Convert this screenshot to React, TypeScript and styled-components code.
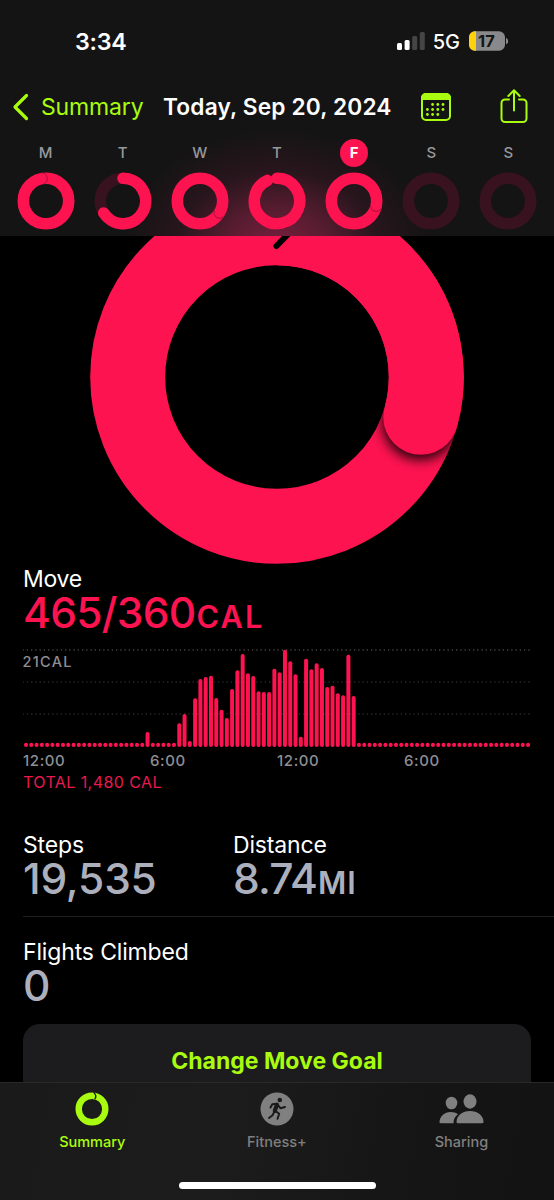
import React from "react";
import styled, { createGlobalStyle } from "styled-components";

const RED = "#fc1350";
const LIME = "#a9fb0f";

const Global = createGlobalStyle`
  * { box-sizing: border-box; }
  body { margin: 0; background: #000; }
`;

const Screen = styled.div`
  width: 554px;
  height: 1200px;
  background: #000;
  overflow: hidden;
  display: flex;
  flex-direction: column;
  font-family: Inter, "Liberation Sans", sans-serif;
  color: #fff;
`;

const T = styled.span<{ $size: number; $w?: number; $ls?: number; $c?: string; $lh?: number }>`
  display: block;
  white-space: nowrap;
  font-size: ${(p) => p.$size}px;
  font-weight: ${(p) => p.$w ?? 400};
  letter-spacing: ${(p) => p.$ls ?? 0}px;
  color: ${(p) => p.$c ?? "#fff"};
  line-height: ${(p) => (p.$lh ? `${p.$lh}px` : "normal")};
`;

const Header = styled.header`
  height: 236px;
  flex: none;
  background:
    radial-gradient(ellipse 155px 122px at 277px 250px, rgba(150, 34, 74, 0.8) 0%, rgba(120, 32, 62, 0.66) 35%, rgba(70, 24, 42, 0.4) 65%, rgba(20, 20, 20, 0) 100%),
    #141414;
`;

const StatusBar = styled.div`
  height: 82px;
  padding: 0 46px 0 75px;
  display: flex;
  align-items: center;
  justify-content: space-between;
`;

const StatusRight = styled.div`
  display: flex;
  align-items: center;
`;

const Network = styled(T)`
  margin: 0 9px 0 8px;
  padding-top: 1px;
`;

const NavBar = styled.div`
  height: 50px;
  display: flex;
  align-items: center;
  padding: 0 26px 0 12px;
`;

const Back = styled.div`
  width: 151px;
  display: flex;
  align-items: center;
  gap: 11px;
`;

const Title = styled.div`
  width: 257px;
  padding-bottom: 2px;
`;

const NavIcons = styled.div`
  flex: 1;
  display: flex;
  align-items: center;
  justify-content: space-between;
`;

const Week = styled.div`
  display: flex;
  padding: 7px 7px 0;
`;

const Day = styled.div`
  width: 77.15px;
  display: flex;
  flex-direction: column;
  align-items: center;
`;

const DayLabel = styled.div<{ $on?: boolean }>`
  width: 28px;
  height: 28px;
  border-radius: 50%;
  display: flex;
  align-items: center;
  justify-content: center;
  padding-bottom: 1px;
  font-size: 15px;
  font-weight: ${(p) => (p.$on ? 700 : 500)};
  color: ${(p) => (p.$on ? "#fff" : "#98989c")};
  background: ${(p) => (p.$on ? RED : "transparent")};
  margin-bottom: 5px;
`;

const Hero = styled.section`
  height: 330px;
  flex: none;
  svg { display: block; }
`;

const Body = styled.main`
  flex: none;
  height: 516px;
  padding-left: 23px;
  overflow: hidden;
`;

const Axis = styled.div`
  display: grid;
  grid-template-columns: 127px 127px 127px auto;
  margin-top: 3px;
  height: 19px;
`;

const Total = styled(T)`
  height: 24px;
`;

const ChartWrap = styled.div`
  margin-top: 12px;
  height: 100px;
  svg { display: block; }
`;

const Stats = styled.div<{ $h: number; $top: number; $line?: boolean }>`
  display: grid;
  grid-template-columns: 210px auto;
  height: ${(p) => p.$h}px;
  padding-top: ${(p) => p.$top}px;
  border-bottom: ${(p) => (p.$line ? "1px solid #1f1f20" : "none")};
`;

const Big = styled.div<{ $c: string; $ls?: number; $unit?: number }>`
  font-size: 42.5px;
  line-height: 42px;
  height: 44px;
  font-weight: 500;
  letter-spacing: ${(p) => p.$ls ?? 0}px;
  color: ${(p) => p.$c};
  white-space: nowrap;
  small {
    margin-left: 1px;
    font-size: 30.7px;
    font-weight: 600;
    letter-spacing: ${(p) => p.$unit ?? 0}px;
  }
`;

const Goal = styled.div`
  width: 508px;
  height: 60px;
  background: #1c1c1e;
  border-radius: 17px 17px 0 0;
  display: flex;
  justify-content: center;
  padding-top: 22px;
`;

const TabBar = styled.nav`
  flex: none;
  height: 118px;
  border-top: 1px solid #29292a;
  background: linear-gradient(100deg, #1a1a1a 0%, #1c1c1c 40%, #151515 75%, #131313 100%);
  display: flex;
  flex-direction: column;
  align-items: center;
`;

const Tabs = styled.div`
  width: 554px;
  height: 99px;
  display: grid;
  grid-template-columns: repeat(3, 184.6px);
`;

const Tab = styled.div`
  display: flex;
  flex-direction: column;
  align-items: center;
  padding-top: 8px;
  gap: 6px;
`;

const HomeBar = styled.div`
  width: 197px;
  height: 7px;
  border-radius: 4px;
  background: #fff;
`;

function pt(cx: number, cy: number, r: number, deg: number) {
  const a = (deg * Math.PI) / 180;
  return [cx + r * Math.sin(a), cy - r * Math.cos(a)];
}

function MiniRing({ end = 0 }: { end?: number }) {
  const full = end > 340;
  const [x, y] = pt(29, 29, 22.7, end);
  const [lx, ly] = pt(29, 29, 17.2, end);
  const [ox, oy] = pt(29, 29, 28.3, end);
  return (
    <svg width="58" height="58" viewBox="0 0 58 58">
      <circle cx="29" cy="29" r="22.7" fill="none" stroke={full ? RED : "#38121f"} strokeWidth="11.6" />
      {full && (
        <path d={`M${lx} ${ly}A5.7 5.7 0 0 0 ${ox} ${oy}`} fill="none" stroke="#a80e3b" strokeWidth="1" />
      )}
      {!full && end > 0 && (
        <path d={`M29 6.3A22.7 22.7 0 1 1 ${x} ${y}`} fill="none" stroke={RED} strokeWidth="11.6" strokeLinecap="round" />
      )}
    </svg>
  );
}

const days: { l: string; end?: number; on?: boolean }[] = [
  { l: "M", end: 352 },
  { l: "T", end: 238 },
  { l: "W", end: 484 },
  { l: "T", end: 335 },
  { l: "F", end: 465, on: true },
  { l: "S" },
  { l: "S" },
];

const active: Record<number, number> = {
  23: 15, 29: 23.7, 30: 33, 31: 6, 32: 48.7, 33: 68, 34: 70, 35: 71.3, 36: 49, 37: 37.3, 38: 29,
  39: 58, 40: 76.7, 41: 93, 42: 73.7, 43: 71, 44: 55.7, 45: 55, 46: 55, 47: 78.3, 48: 74.7,
  49: 97.3, 50: 85.7, 51: 72.7, 52: 10.3, 53: 88.3, 54: 77.7, 55: 83.7, 56: 79, 57: 60, 58: 61.3,
  59: 53.7, 60: 51.7, 61: 92.3, 62: 51,
};

function Chart() {
  return (
    <svg width="531" height="100" viewBox="23 648 531 100">
      {[650, 682, 714].map((y, i) => (
        <line key={y} x1="22.5" x2="532" y1={y} y2={y} stroke={i ? "#3c3c3e" : "#646466"} strokeWidth="1.2" strokeDasharray="1.3 2.95" />
      ))}
      <text x="22.5" y="666.5" fontSize="14.5" fontWeight="500" fill="#8e8e93" textLength="49">21CAL</text>
      {Array.from({ length: 96 }, (_, i) => {
        const h = active[i] ?? 4.2;
        return <rect key={i} x={26 + i * 5.285 - 2} y={747 - h} width="4" height={h} rx="1.9" fill={RED} />;
      })}
    </svg>
  );
}

export default function App() {
  const [ex, ey] = pt(277, 377.5, 149.3, 105);
  return (
    <Screen>
      <Global />
      <Header>
        <StatusBar>
          <T $size={23.3} $w={600} $ls={-0.3}>3:34</T>
          <StatusRight>
            <svg width="28" height="18" viewBox="0 0 28 18">
              <rect x="0" y="11" width="5" height="7" rx="1.5" fill="#fff" />
              <rect x="7.6" y="8" width="5" height="10" rx="1.5" fill="#fff" />
              <rect x="15.2" y="4" width="5" height="14" rx="1.5" fill="#454545" />
              <rect x="22.8" y="0" width="5" height="18" rx="1.5" fill="#454545" />
            </svg>
            <Network $size={20} $w={500}>5G</Network>
            <svg width="39" height="20" viewBox="0 0 39 20">
              <defs><clipPath id="bat"><rect width="36" height="19.5" y=".2" rx="6" /></clipPath></defs>
              <g clipPath="url(#bat)">
                <rect width="36" height="20" fill="#89898b" />
                <rect width="7" height="20" fill="#fdd20c" />
              </g>
              <path d="M37 6.8q2.2 1.2 2.2 3.2T37 13.2Z" fill="#89898b" />
              <text x="17.4" y="16" fontSize="16.5" fontWeight="700" textAnchor="middle" fill="#141414">17</text>
            </svg>
          </StatusRight>
        </StatusBar>
        <NavBar>
          <Back>
            <svg width="18" height="28" viewBox="0 0 18 28">
              <path d="M14.5 2.5L3 14l11.5 11.5" fill="none" stroke={LIME} strokeWidth="3.2" strokeLinecap="round" strokeLinejoin="round" />
            </svg>
            <T $size={23} $ls={-0.15} $c={LIME}>Summary</T>
          </Back>
          <Title><T $size={22.7} $w={600} $ls={0.15}>Today, Sep 20, 2024</T></Title>
          <NavIcons>
            <svg width="32" height="30" viewBox="0 0 32 30">
              <rect x="2" y="2" width="28" height="26" rx="4" fill="none" stroke={LIME} strokeWidth="2" />
              <path d="M1 8V6a5 5 0 0 1 5-5h20a5 5 0 0 1 5 5v2Z" fill={LIME} />
              {[[12.6, 12.5], [17.8, 12.5], [23, 12.5], [7.4, 17.5], [12.6, 17.5], [17.8, 17.5], [23, 17.5], [7.4, 22.5], [12.6, 22.5], [17.8, 22.5]].map(([x, y]) => (
                <circle key={`${x}-${y}`} cx={x} cy={y} r="1.4" fill={LIME} />
              ))}
            </svg>
            <svg width="28" height="36" viewBox="0 0 28 36">
              <path d="M9 10.5H5A3.5 3.5 0 0 0 1.5 14v15.5A3.5 3.5 0 0 0 5 33h18a3.5 3.5 0 0 0 3.5-3.5V14a3.5 3.5 0 0 0-3.5-3.5h-4M14 21.5V1.5M8.3 7L14 1.3 19.7 7" fill="none" stroke={LIME} strokeWidth="2" strokeLinecap="round" strokeLinejoin="round" />
            </svg>
          </NavIcons>
        </NavBar>
        <Week>
          {days.map((d, i) => (
            <Day key={i}>
              <DayLabel $on={d.on}>{d.l}</DayLabel>
              <MiniRing end={d.end} />
            </Day>
          ))}
        </Week>
      </Header>
      <Hero>
        <svg width="554" height="330" viewBox="0 236.5 554 330">
          <defs>
            <clipPath id="band">
              <path clipRule="evenodd" d="M90.2 377.5a186.8 186.8 0 1 0 373.6 0a186.8 186.8 0 1 0-373.6 0ZM165.2 377.5a111.8 111.8 0 1 0 223.6 0a111.8 111.8 0 1 0-223.6 0Z" />
            </clipPath>
            <filter id="soft" x="-50%" y="-50%" width="200%" height="200%"><feGaussianBlur stdDeviation="6" /></filter>
          </defs>
          <circle cx="277" cy="377.5" r="149.3" fill="none" stroke={RED} strokeWidth="75" />
          <g clipPath="url(#band)">
            <circle cx={ex - 1} cy={ey + 6.5} r="38" fill="#000" opacity=".85" filter="url(#soft)" />
          </g>
          <path d={`M277 228.2A149.3 149.3 0 0 1 ${ex} ${ey}`} fill="none" stroke={RED} strokeWidth="75" />
          <circle cx={ex - 0.4} cy={ey + 1.6} r="37.5" fill={RED} />
          <path d="M276.5 246.5L292 230.5" stroke="#000" strokeWidth="6" strokeLinecap="round" />
        </svg>
      </Hero>
      <Body>
        <T $size={23} $ls={-0.3} $lh={26}>Move</T>
        <Big $c={RED} $ls={-0.7} $unit={2.1}>465/360<small>CAL</small></Big>
        <ChartWrap><Chart /></ChartWrap>
        <Axis>
          {["12:00", "6:00", "12:00", "6:00"].map((t, i) => (
            <T key={i} $size={15} $w={500} $ls={0.6} $c="#8e8e93" $lh={19}>{t}</T>
          ))}
        </Axis>
        <Total $size={16} $ls={0.42} $c="#e9184e" $lh={24}>TOTAL 1,480 CAL</Total>
        <Stats $h={123} $top={38} $line>
          <div><T $size={23} $ls={-0.15} $lh={26}>Steps</T><Big $c="#acb0bd" $ls={-0.2}>19,535</Big></div>
          <div><T $size={23} $ls={-0.15} $lh={26}>Distance</T><Big $c="#acb0bd" $ls={-0.9} $unit={1}>8.74<small>MI</small></Big></div>
        </Stats>
        <Stats $h={107} $top={22}>
          <div><T $size={23} $ls={-0.15} $lh={26}>Flights Climbed</T><Big $c="#acb0bd">0</Big></div>
        </Stats>
        <Goal><T $size={23} $w={700} $c={LIME} $lh={30}>Change Move Goal</T></Goal>
      </Body>
      <TabBar>
        <Tabs>
          <Tab>
            <svg width="36" height="36" viewBox="0 0 36 36">
              <circle cx="18" cy="18" r="13.3" fill="none" stroke={LIME} strokeWidth="6.4" />
              <path d="M19.5 1.2q4 3.5 1.2 7" fill="none" stroke="#1b1b1b" strokeWidth="1.3" />
            </svg>
            <T $size={14.5} $w={500} $c={LIME}>Summary</T>
          </Tab>
          <Tab>
            <svg width="36" height="36" viewBox="0 0 36 36">
              <circle cx="18" cy="18" r="16.5" fill="#808080" />
              <circle cx="20.8" cy="9" r="2.3" fill="#1a1a1a" />
              <path d="M11.5 16.5l1.8-3.3 4.5-.4M19 14l2.5 3.3 4.5-1.3M16.500 20l3.700 2.700-1.700 5M15.300 21l-2 3.500-3.300 2.500" fill="none" stroke="#1a1a1a" strokeWidth="2" strokeLinecap="round" strokeLinejoin="round" />
              <path d="M18 13.8L15.8 19.8" stroke="#1a1a1a" strokeWidth="4.2" strokeLinecap="round" />
            </svg>
            <T $size={14.5} $w={500} $c="#808080">Fitness+</T>
          </Tab>
          <Tab>
            <svg width="46" height="36" viewBox="0 0 46 36">
              <g fill="#808080">
                <ellipse cx="13.5" cy="12" rx="5.8" ry="6.3" />
                <path d="M1.5 31.5c0-6 5-10.500 11-10.500 3 0 5.500.8 7.500 2.300-3 2.200-4.500 4.700-4.500 8.900H3q-1.500 0-1.500-.7Z" />
                <ellipse cx="32" cy="10.5" rx="6.5" ry="7.2" />
                <path d="M18.5 31c0-6.500 6-11 13.500-11s13.500 4.500 13.500 11q0 1.200-1.500 1.200H20q-1.500 0-1.500-1.200Z" />
              </g>
            </svg>
            <T $size={14.5} $w={500} $c="#808080">Sharing</T>
          </Tab>
        </Tabs>
        <HomeBar />
      </TabBar>
    </Screen>
  );
}
